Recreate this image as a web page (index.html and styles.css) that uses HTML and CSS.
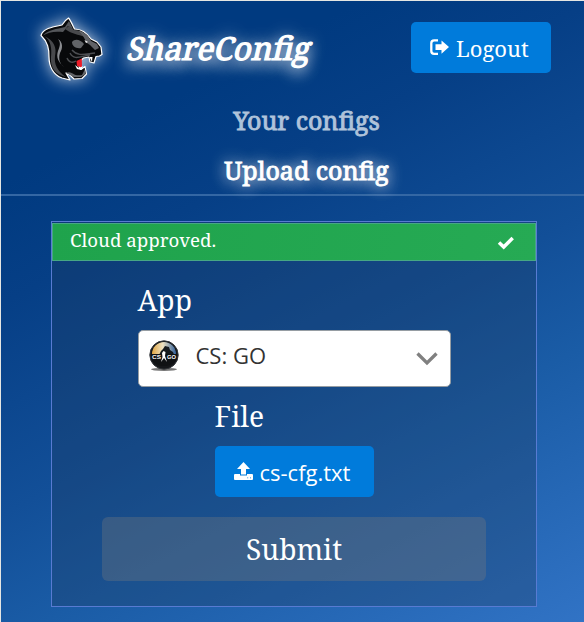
FILE: index.html
```html
<!DOCTYPE html>
<html lang="en">
<head>
<meta charset="utf-8">
<title>ShareConfig</title>
<link rel="stylesheet" href="styles.css">
</head>
<body>
<div class="page">
  <header class="header">
    <div class="topbar">
      <svg class="logo" viewBox="38 15 66 68" aria-hidden="true">
        <path d="M41 35.500C43 29 51 27 62 25C64 22 66 19.500 68.500 18C71 21 72.500 25 74.500 29C82 29 87 33 91 39L97 42L101 47L102 54.500L99.500 56L96 56.500L94 63L90 62L89 57L83.500 58C79 61 77.500 66 81 69.500L85 66.500L86.500 74L82 78.500L74 79L70.500 75.500L66 73L70 80L62 78C53 75 49 66 49 57C49 49 48 42 41 35.500Z" fill="#08090b" stroke="#fff" stroke-width="1.200" stroke-linejoin="round"/>
        <path d="M43 35.500C47 30 57 29 65 27L69 21L73 29L68 26L63 32C55 31 48 32 43 35.500Z" fill="#54565a"/>
        <path d="M65 29L69 26L74 30C81 30 86 34 89 38L82 36C76 34 70 33 65 29Z" fill="#48494c"/>
        <path d="M44 36C51 40 52 49 51 57C50 68 56 75 66 77C57 71 54 64 55 56C57 48 54 40 44 36Z" fill="#48494c"/>
        <path d="M58 39C63 42 63 48 60 53C58 59 60 64 64 67C58 62 56 57 58 51C60 46 61 43 58 39Z" fill="#8a8c90"/>
        <path d="M72 42C75 38 81 40 84 44L81 48C76 49 72 46 72 42Z" fill="#626468"/>
        <path d="M79 31C85 32 89 37 91 41L97 44L99 48L95 50L90 45L87 43L83 36Z" fill="#606267"/>
        <path d="M84.500 40L88 42L86 43Z" fill="#fff"/>
        <path d="M72 50C78 57 85 54 95 53M70 53C74 61 81 56 90 55M67 58C69 63 73 63 76 61" fill="none" stroke="#4c4e52" stroke-width="1.400"/>
        <path d="M66 73C72 70 73 77 82 75L85 69L85.500 74L81 77L74 77Z" fill="#626468"/>
        <path d="M76.500 61L81.800 58.500L82 67.500L77 66Z" fill="#ed1c28"/>
        <path d="M75 65L79 68L83 66L81 70L77 69Z M89.500 57L92.500 57L92 62Z" fill="#fff"/>
      </svg>
      <span class="brand">ShareConfig</span>
      <button class="logout" type="button">
        <svg class="logout-icon" viewBox="0 0 20 17" aria-hidden="true"><path d="M8 1.300H4.200Q1.300 1.300 1.300 4.200V12Q1.300 14.900 4.200 14.900H8" fill="none" stroke="#fff" stroke-width="2.300"/><path d="M5.500 5.200H11.500V1.500L19 8.100L11.500 14.700V11.100H5.500Z" fill="#fff"/></svg>
        <span>Logout</span>
      </button>
    </div>
    <nav class="nav">
      <a class="nav-link">Your configs</a>
      <a class="nav-link active">Upload config</a>
    </nav>
  </header>
  <main class="panel">
    <div class="notice">
      <span>Cloud approved.</span>
      <svg class="check" viewBox="0 0 18 14" aria-hidden="true"><path d="M2 6.500L6.700 11L15.700 2" fill="none" stroke="#fff" stroke-width="3.500"/></svg>
    </div>
    <form class="form">
      <div class="app-field">
        <label class="label">App</label>
        <div class="select">
          <svg class="app-icon" viewBox="0 0 32 32" aria-hidden="true">
            <defs><linearGradient id="sky"><stop offset="0" stop-color="#e1a744"/><stop offset=".45" stop-color="#eee2c2"/><stop offset="1" stop-color="#315f9b"/></linearGradient></defs>
            <ellipse cx="16" cy="29.300" rx="13" ry="1.600" fill="#777"/>
            <circle cx="16" cy="15" r="14.200" fill="#15171a" stroke="#34373b"/>
            <path d="M4 14A12 12 0 0 1 28 14L25 16H7Z" fill="url(#sky)"/>
            <path d="M10 17L13 11L15 9L17 6L21 7L22 10L25 12L28 19H6Z" fill="#15191d"/>
            <path d="M3 14H29L28 20C23 28 9 28 4 20Z" fill="#101214"/>
            <path d="M15.500 11L17.500 12L17 16L19 22L16 18L13 22L14.500 17L14 13Z" fill="#fff"/>
            <text class="app-mark" x="4" y="19" textLength="9" lengthAdjust="spacingAndGlyphs">CS</text><text class="app-mark" x="19" y="19" textLength="9" lengthAdjust="spacingAndGlyphs">GO</text>
          </svg>
          <span class="value">CS: GO</span>
          <svg class="chevron" viewBox="0 0 22 14" aria-hidden="true"><path d="M1.500 1.500L11 11L20.500 1.500" fill="none" stroke="#808080" stroke-width="3.300"/></svg>
        </div>
      </div>
      <div class="file-field">
        <label class="label">File</label>
        <button class="file" type="button">
          <svg class="upload" viewBox="0 0 19 19" aria-hidden="true"><path d="M9.500 0L16 7H12V12.500H7V7H3Z" fill="#fff"/><path d="M1 12H6V13.500H13V12H18Q19 12 19 13V17Q19 18 18 18H1Q0 18 0 17V13Q0 12 1 12ZM13.200 15.400V16.300H14.200V15.400ZM16 15.400V16.300H17V15.400Z" fill="#fff" fill-rule="evenodd"/></svg>
          <span>cs-cfg.txt</span>
        </button>
      </div>
      <button class="submit" type="button"><span>Submit</span></button>
    </form>
  </main>
</div>
</body>
</html>
```
FILE: styles.css
```css
* { box-sizing: border-box; }
body { margin: 0; background: #e5e6e3; }
button { border: 0; margin: 0; padding: 0; color: #fff; font: inherit; }
svg { display: block; flex: none; }
.page {
  height: 622px;
  padding: 1px 0 0 1px;
  background: linear-gradient(153deg, #003a80 0%, #003a80 20%, #063f86 33%, #124f98 56%, #1a5ca6 70%, #3173c5 100%) content-box;
  color: #fff;
  font-family: "Noto Serif", "DejaVu Serif Condensed", "DejaVu Serif", serif;
  overflow: hidden;
}
.header { height: 195px; border-bottom: 2px solid #3467a4; }
.topbar { display: flex; height: 98px; padding: 14px 33px 0 37px; }
.logo { width: 66px; height: 68px; filter: drop-shadow(0 0 8px rgba(255,255,255,.75)); }
.brand { margin: 11px 0 0 21px; width: 190px; font-size: 31.700px; line-height: 44px; -webkit-text-stroke: 1.200px #fff; transform: skewX(-13deg); white-space: nowrap; text-shadow: 0 7px 14px rgba(255,255,255,.8), 0 0 16px rgba(255,255,255,.8); }
.logout { display: flex; align-items: center; width: 140px; height: 51px; margin: 7px 0 0 auto; padding-left: 19px; border-radius: 5px; background: #007bdb; font-size: 22px; }
.logout-icon { width: 20px; height: 17px; margin-right: 6px; }
.nav { display: flex; flex-direction: column; align-items: center; padding-left: 28px; }
.nav-link { height: 50px; font-size: 25px; line-height: 42px; -webkit-text-stroke: .9px #afc3da; color: #afc3da; white-space: nowrap; }
.nav-link.active { color: #fff; -webkit-text-stroke-color: #fff; text-shadow: 0 0 16px rgba(255,255,255,.9), 0 3px 14px rgba(255,255,255,.5); }
.panel { width: 486px; height: 386px; margin: 25px 0 0 50px; border: 1px solid #587bd2; padding-top: 1px; background: rgba(30,55,90,.3); }
.notice { display: flex; align-items: center; justify-content: space-between; height: 38px; padding: 0 20px 5px 17px; border: 1px solid #47a785; background: linear-gradient(100deg, #1fa34c, #26aa54); font-size: 18.700px; }
.check { width: 18px; height: 14px; margin-top: 6px; }
.form { display: flex; flex-direction: column; align-items: center; }
.app-field { width: 313px; padding-top: 20px; }
.label { display: block; height: 49px; font-size: 28.200px; line-height: 38px; }
.select { display: flex; align-items: center; height: 57px; padding: 0 12px 0 9px; border: 1px solid #969da3; border-radius: 5px; background: #fff; color: #333; }
.app-icon { width: 32px; height: 32px; margin-top: -5px; }
.app-mark { fill: #fff; font: bold 5.500px "Liberation Sans", sans-serif; }
.value { margin: -7px auto 0 16px; font: 22px "Open Sans", sans-serif; }
.chevron { width: 22px; height: 14px; }
.file-field { width: 159px; padding-top: 10px; }
.file { display: flex; align-items: center; width: 159px; height: 51px; padding-left: 19px; border-radius: 5px; background: #007bdb; font: 22px "Open Sans", sans-serif; }
.upload { width: 19px; height: 19px; margin: -1px 7px 0 0; }
.submit { width: 384px; height: 64px; margin-top: 20px; border-radius: 6px; background: rgba(125,125,125,.32); font-size: 28.200px; }
```
